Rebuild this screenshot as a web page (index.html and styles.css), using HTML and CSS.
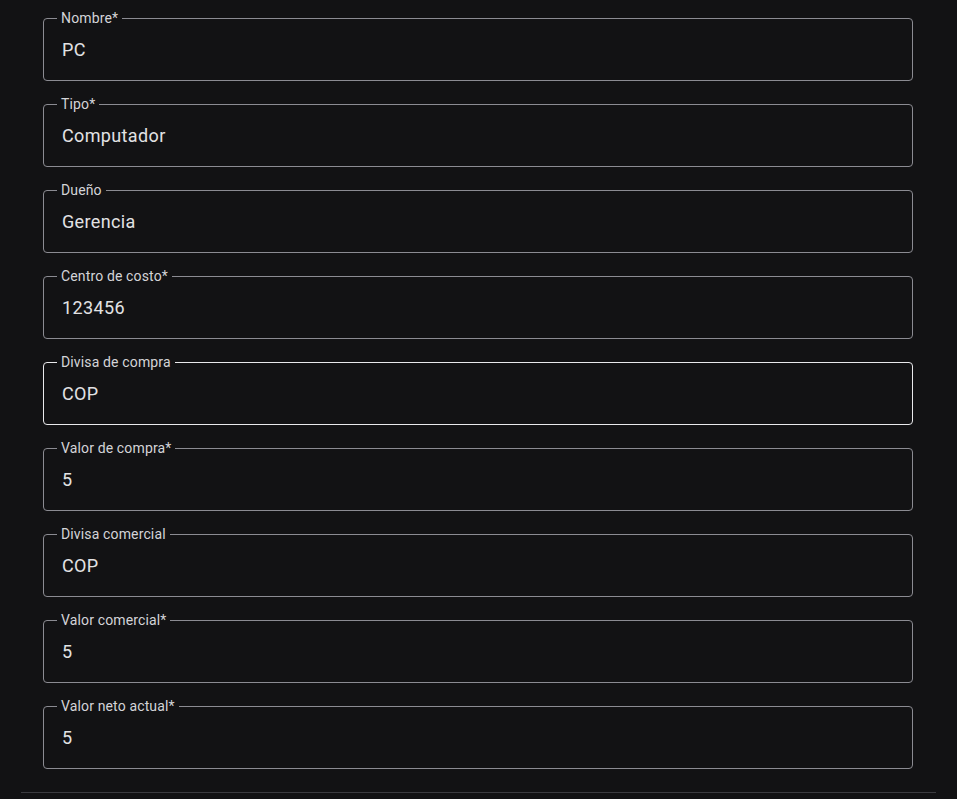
FILE: index.html
```html
<!DOCTYPE html>
<html lang="es">
<head>
<meta charset="utf-8">
<title>Formulario</title>
<link rel="stylesheet" href="styles.css">
</head>
<body>
<div class="panel">
  <form class="form">
    <div class="field"><span class="label">Nombre*</span><div class="value">PC</div></div>
    <div class="field"><span class="label">Tipo*</span><div class="value">Computador</div></div>
    <div class="field"><span class="label">Dueño</span><div class="value">Gerencia</div></div>
    <div class="field"><span class="label">Centro de costo*</span><div class="value">123456</div></div>
    <div class="field focused"><span class="label">Divisa de compra</span><div class="value">COP</div></div>
    <div class="field"><span class="label">Valor de compra*</span><div class="value">5</div></div>
    <div class="field"><span class="label">Divisa comercial</span><div class="value">COP</div></div>
    <div class="field"><span class="label">Valor comercial*</span><div class="value">5</div></div>
    <div class="field"><span class="label">Valor neto actual*</span><div class="value">5</div></div>
  </form>
  <hr class="divider">
</div>
</body>
</html>
```
FILE: styles.css
```css
html, body {
  margin: 0;
  background: #121214;
  height: 100%;
}
body {
  font-family: Roboto, "Liberation Sans", sans-serif;
  color: #e6e6e8;
}
.panel {
  margin: 0 21px;
}
.form {
  display: flex;
  flex-direction: column;
  gap: 23px;
  padding: 18px 23px 23px 22px;
}
.field {
  position: relative;
  height: 61px;
  border: 1px solid #8b8b92;
  border-radius: 4px;
  display: flex;
  align-items: center;
}
.field.focused {
  border-color: #e9e9ec;
}
.label {
  position: absolute;
  top: -9px;
  left: 13px;
  padding: 0 4px;
  background: #121214;
  font-size: 14px;
  line-height: 16px;
  color: #d4d4d8;
  letter-spacing: 0.01em;
}
.value {
  padding-left: 18px;
  font-size: 18px;
  letter-spacing: 0.02em;
  color: #e2e2e4;
}
.divider {
  margin: 0;
  border: 0;
  height: 1px;
  background: #3b3b40;
}
```
